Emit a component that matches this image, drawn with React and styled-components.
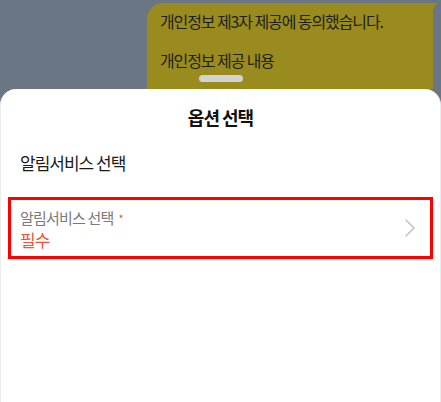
import React from 'react';
import styled, { createGlobalStyle } from 'styled-components';

const GlobalStyle = createGlobalStyle`
  html, body {
    margin: 0;
    padding: 0;
  }
  body {
    font-family: "Noto Sans CJK KR", "Noto Sans", sans-serif;
    background: #6b7684;
  }
`;

const Screen = styled.div`
  width: 441px;
  height: 402px;
  display: flex;
  flex-direction: column;
  overflow: hidden;
  background: #6b7684;
`;

const ChatArea = styled.div`
  height: 89px;
  flex-shrink: 0;
  display: flex;
  justify-content: flex-end;
  padding: 3px 8px 0 0;
  box-sizing: border-box;
  overflow: hidden;
`;

const Bubble = styled.div`
  position: relative;
  width: 286px;
  height: 120px;
  flex-shrink: 0;
  box-sizing: border-box;
  padding: 9px 13px;
  background: #9a8b1f;
  border-radius: 16px 3px 16px 16px;
  color: #1e1e1e;
  font-size: 16px;
  line-height: 19.5px;
  letter-spacing: -1.1px;

  &::after {
    content: '';
    position: absolute;
    top: 0;
    right: -4px;
    width: 10px;
    height: 10px;
    background: #9a8b1f;
    clip-path: polygon(0 0, 100% 0, 40% 100%, 0 100%);
  }
`;

const Line = styled.div`
  min-height: 19.5px;
`;

const Sheet = styled.div`
  position: relative;
  flex: 1;
  background: #ffffff;
  border-radius: 16px 16px 0 0;
  border-left: 1px solid #ececec;
  border-right: 1px solid #ececec;
  display: flex;
  flex-direction: column;
  padding-top: 16px;
`;

const Handle = styled.div`
  position: absolute;
  top: -14px;
  left: 50%;
  transform: translateX(-50%);
  width: 44px;
  height: 7px;
  border-radius: 4px;
  background: #d2d2d2;
`;

const Title = styled.div`
  text-align: center;
  font-size: 18px;
  font-weight: 700;
  line-height: 24px;
  letter-spacing: -1px;
  color: #111;
`;

const SectionLabel = styled.div`
  margin-top: 22px;
  padding-left: 19px;
  font-size: 17px;
  line-height: 24px;
  letter-spacing: -1px;
  color: #1a1a1a;
`;

const SelectBox = styled.div`
  margin: 22px 7px 0 7px;
  border: 3px solid #ff0000;
  height: 62px;
  box-sizing: border-box;
  display: flex;
  align-items: center;
  padding: 0 14px 0 9px;
`;

const SelectText = styled.div`
  flex: 1;
  display: flex;
  flex-direction: column;
  padding-top: 3px;
`;

const FieldLabel = styled.div`
  font-size: 15px;
  line-height: 20px;
  letter-spacing: -0.8px;
  color: #7a7a7a;
`;

const Required = styled.span`
  color: #e8573a;
  font-size: 11px;
  vertical-align: top;
  margin-left: 5px;
`;

const FieldValue = styled.div`
  margin-top: 1px;
  font-size: 17px;
  line-height: 22px;
  letter-spacing: -1px;
  color: #e8573a;
`;

const Chevron = () => (
  <svg width="12" height="20" viewBox="0 0 12 20" fill="none">
    <path d="M2 2 L10 10 L2 18" stroke="#c4c4c4" strokeWidth="1.6" strokeLinecap="round" strokeLinejoin="round" />
  </svg>
);

export default function App() {
  return (
    <>
      <GlobalStyle />
      <Screen>
        <ChatArea>
          <Bubble>
            <Line>개인정보 제3자 제공에 동의했습니다.</Line>
            <Line />
            <Line>개인정보 제공 내용</Line>
          </Bubble>
        </ChatArea>
        <Sheet>
          <Handle />
          <Title>옵션 선택</Title>
          <SectionLabel>알림서비스 선택</SectionLabel>
          <SelectBox>
            <SelectText>
              <FieldLabel>
                알림서비스 선택<Required>*</Required>
              </FieldLabel>
              <FieldValue>필수</FieldValue>
            </SelectText>
            <Chevron />
          </SelectBox>
        </Sheet>
      </Screen>
    </>
  );
}
